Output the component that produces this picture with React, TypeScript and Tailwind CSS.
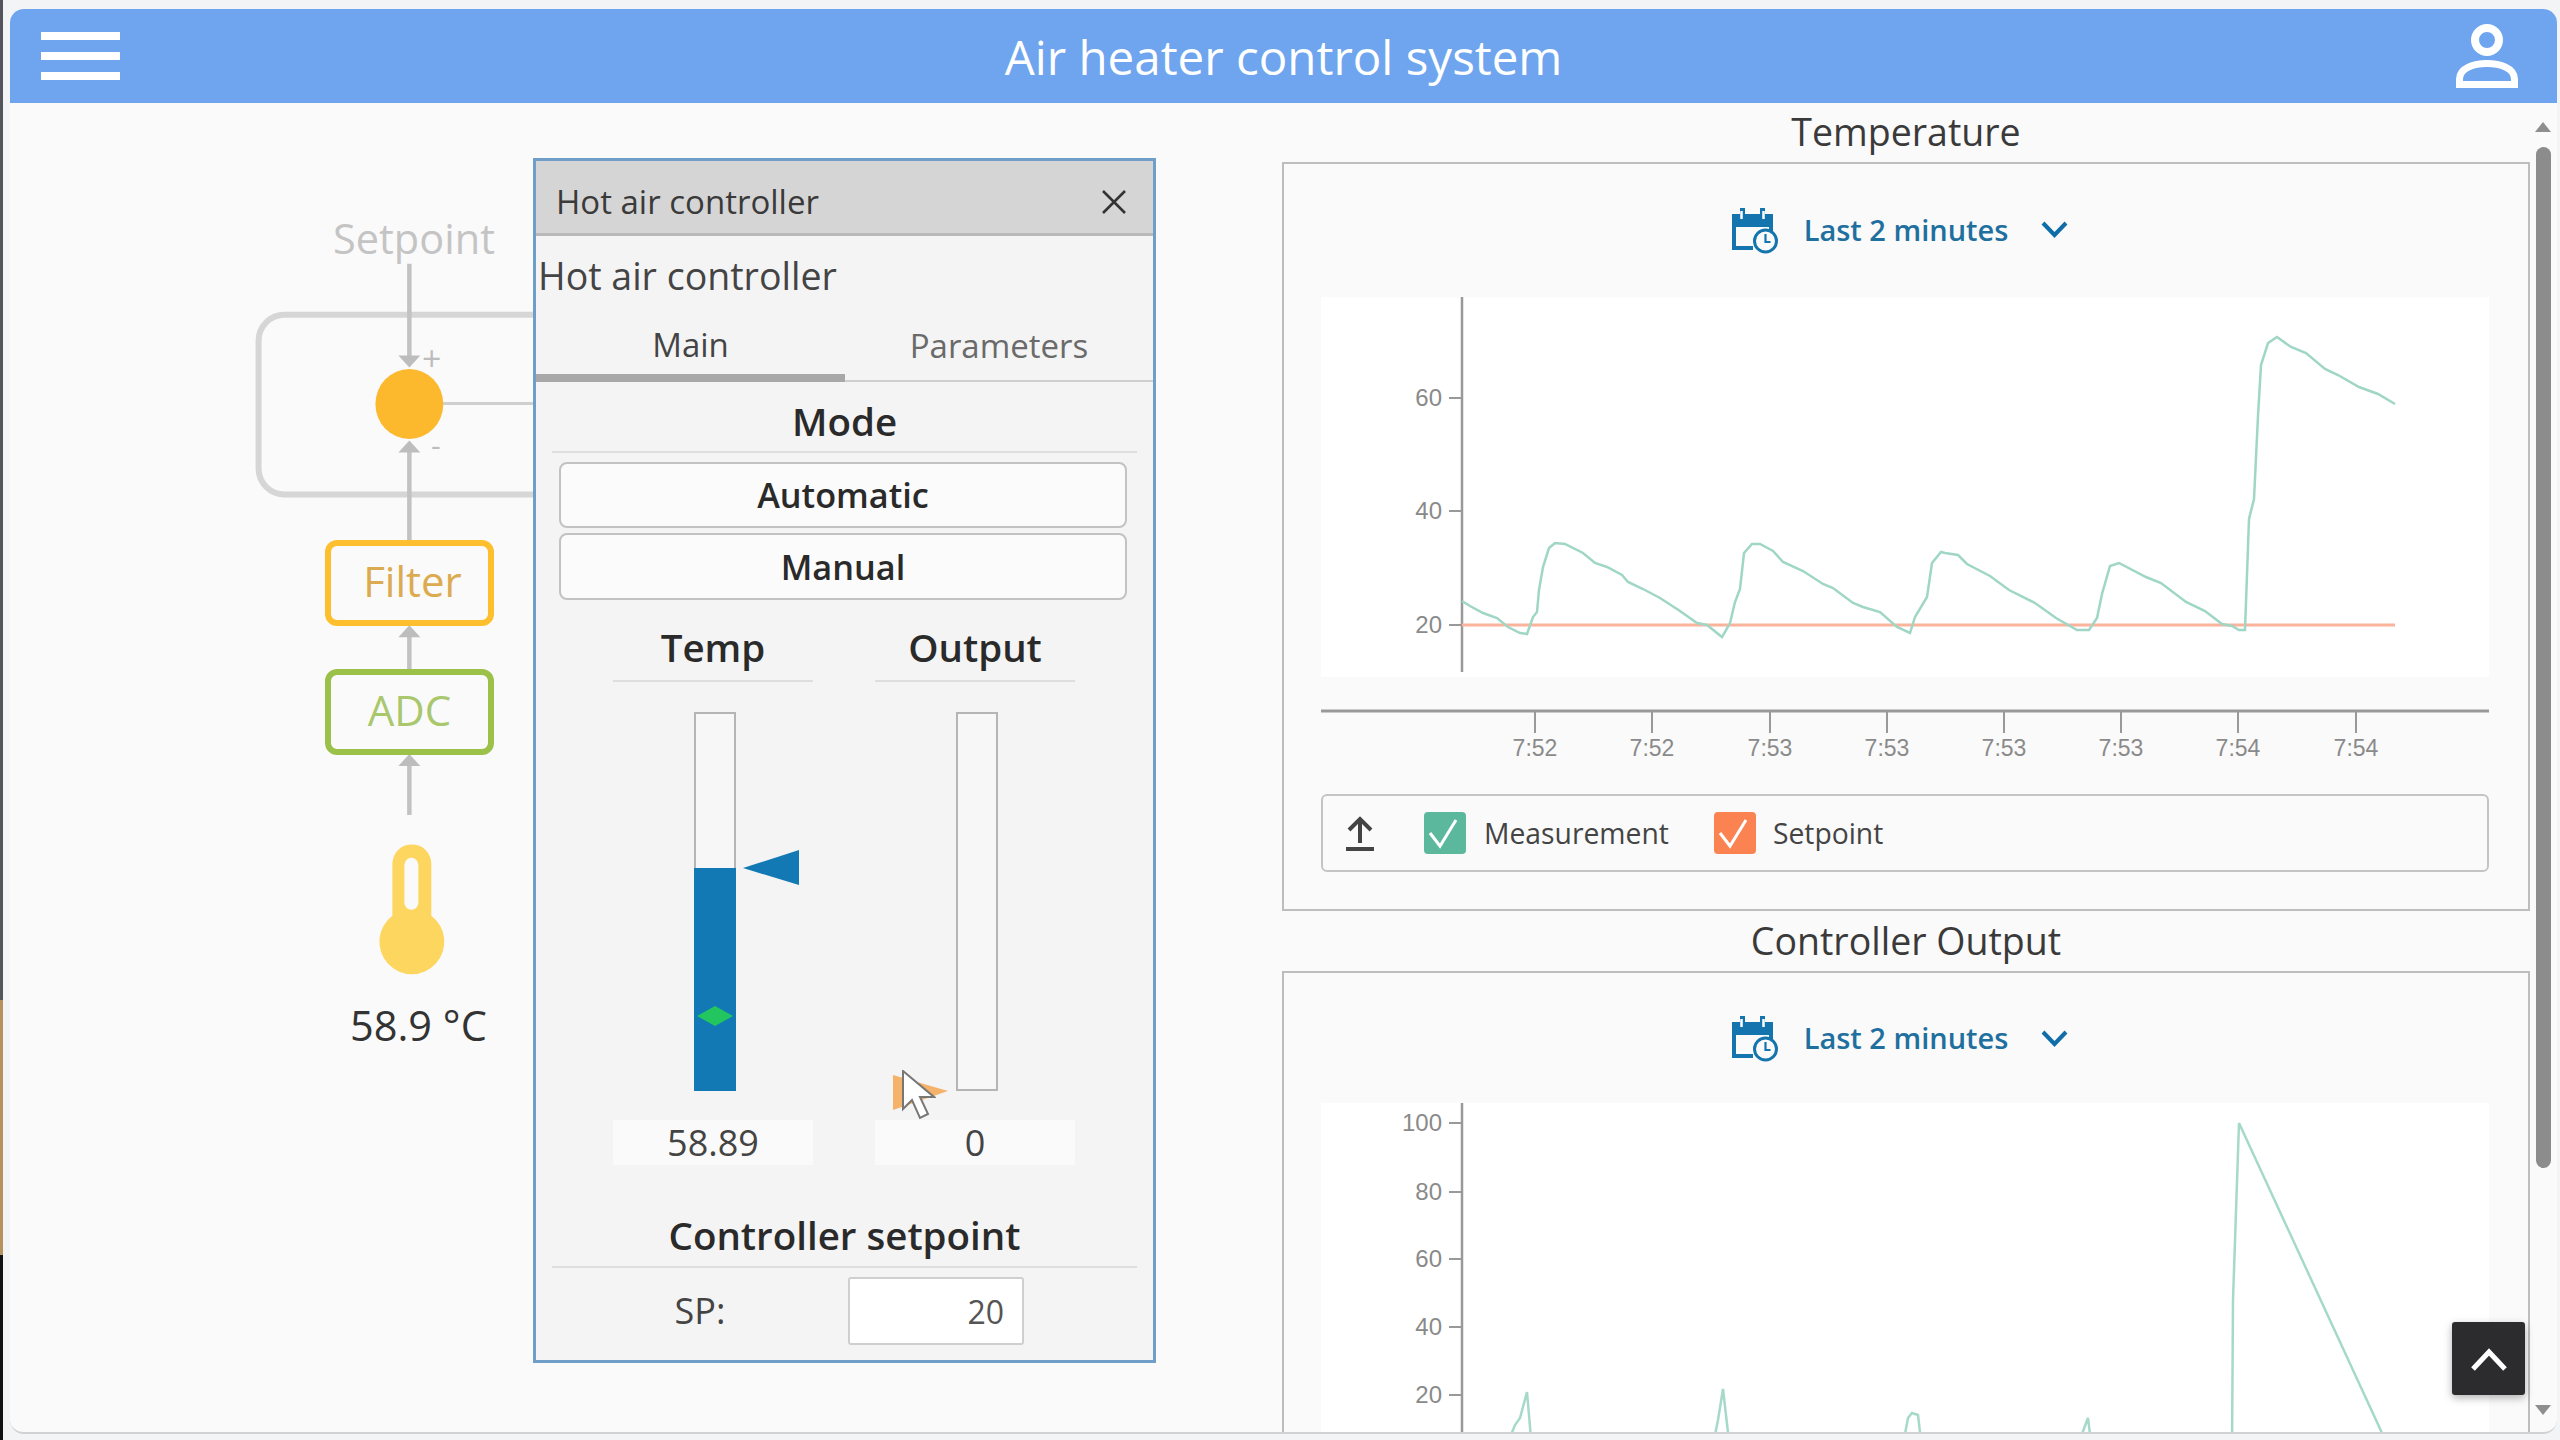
const tempLine =
  "1462,601 1470,606 1483,613 1497,618 1508,627 1520,633 1527,634 1533,617 1537,612 1539,590 1543,567 1549,548 1555,543 1565,544 1583,553 1595,563 1607,567 1622,575 1628,582 1643,589 1660,598 1680,611 1697,623 1707,625 1722,637 1730,623 1735,602 1740,589 1744,553 1752,544 1760,544 1773,551 1783,562 1803,571 1823,584 1833,588 1853,603 1863,607 1880,612 1897,627 1910,633 1915,617 1927,597 1932,563 1941,552 1945,553 1958,555 1967,564 1990,576 2009,590 2035,603 2056,618 2077,630 2089,630 2097,618 2102,594 2110,566 2119,563 2146,577 2161,583 2186,602 2205,611 2222,624 2232,626 2239,630 2245,630 2249,519 2254,499 2258,416 2261,365 2268,343 2277,337 2291,347 2306,353 2325,369 2338,375 2359,387 2378,394 2395,404";

const outputLine =
  "1505,1450 1515,1425 1520,1418 1527,1392 1532,1450 1712,1450 1718,1420 1723,1389 1730,1450 1902,1450 1908,1418 1912,1413 1918,1415 1922,1450 2076,1450 2088,1418 2092,1450 2232,1450 2233,1300 2239,1123 2382,1433 2390,1450";

const timeTicks = [
  [1535, "7:52"],
  [1652, "7:52"],
  [1770, "7:53"],
  [1887, "7:53"],
  [2004, "7:53"],
  [2121, "7:53"],
  [2238, "7:54"],
  [2356, "7:54"],
] as const;

function CalendarIcon() {
  return (
    <svg viewBox="0 0 47 48" className="h-[48px] w-[47px] shrink-0">
      <path d="M0 8h8V2h5v6h15V2h5v6h8v13H0z" fill="#1474ad" />
      <path d="M9.5 5v8M31.5 5v8" stroke="#fff" strokeWidth="2.5" />
      <path d="M2 20v22h19M39 20v6" fill="none" stroke="#1474ad" strokeWidth="4" />
      <circle cx="33.5" cy="35" r="11" fill="#fafafa" stroke="#1474ad" strokeWidth="3" />
      <path d="M33.5 28v8h5" fill="none" stroke="#1474ad" strokeWidth="2.2" />
    </svg>
  );
}

function RangePicker() {
  return (
    <div className="mr-[12px] flex items-center justify-center">
      <CalendarIcon />
      <span className="ml-[25px] text-[29px] font-semibold text-[#1f6f9f]">Last 2 minutes</span>
      <svg viewBox="0 0 27 17" className="ml-[33px] h-[17px] w-[27px]">
        <path d="M2 2l11.5 12L25 2" fill="none" stroke="#0f6ea8" strokeWidth="4" />
      </svg>
    </div>
  );
}

function YLabels({ ticks }: { ticks: [number, string][] }) {
  return (
    <>
      {ticks.map(([y, label]) => (
        <g key={label}>
          <line x1="1449" x2="1462" y1={y} y2={y} stroke="#999" strokeWidth="2" />
          <text x="1442" y={y + 8} textAnchor="end" fontSize="24" fill="#8a8a8a" fontFamily="Liberation Sans">
            {label}
          </text>
        </g>
      ))}
    </>
  );
}

function TemperatureChart() {
  return (
    <svg viewBox="1321 297 1168 468" className="ml-[37px] block h-[468px] w-[1168px]">
      <rect x="1321" y="297" width="1168" height="380" fill="#fff" />
      <line x1="1462" x2="1462" y1="296" y2="672" stroke="#999" strokeWidth="2.5" />
      <YLabels
        ticks={[
          [398, "60"],
          [511, "40"],
          [625, "20"],
        ]}
      />
      <line x1="1462" x2="2395" y1="625" y2="625" stroke="#fcb39c" strokeWidth="3" />
      <polyline points={tempLine} fill="none" stroke="#9fd6c5" strokeWidth="2.5" />
      <line x1="1321" x2="2489" y1="711" y2="711" stroke="#999" strokeWidth="3" />
      {timeTicks.map(([x, label], i) => (
        <g key={i}>
          <line x1={x} x2={x} y1="711" y2="733" stroke="#999" strokeWidth="2" />
          <text x={x} y="756" textAnchor="middle" fontSize="23" fill="#8a8a8a" fontFamily="Liberation Sans">
            {label}
          </text>
        </g>
      ))}
    </svg>
  );
}

function OutputChart() {
  return (
    <svg viewBox="1321 1103 1168 340" className="ml-[37px] block h-[340px] w-[1168px]">
      <rect x="1321" y="1103" width="1168" height="340" fill="#fff" />
      <line x1="1462" x2="1462" y1="1103" y2="1443" stroke="#999" strokeWidth="2.5" />
      <YLabels
        ticks={[
          [1123, "100"],
          [1192, "80"],
          [1259, "60"],
          [1327, "40"],
          [1395, "20"],
        ]}
      />
      <polyline points={outputLine} fill="none" stroke="#a6d9ca" strokeWidth="2.5" />
    </svg>
  );
}

function LegendCheck({ color }: { color: string }) {
  return (
    <svg viewBox="0 0 42 42" className="h-[42px] w-[42px] shrink-0">
      <rect width="42" height="42" rx="4" fill={color} />
      <path d="M6 21l10 13L32 8" fill="none" stroke="#fff" strokeWidth="3" />
    </svg>
  );
}

function Legend() {
  return (
    <div className="mt-[29px] ml-[37px] flex h-[78px] w-[1168px] items-center rounded-[6px] border-2 border-[#c4c4c4] pl-[23px] text-[28.300px] text-[#444]">
      <svg viewBox="0 0 28 35" className="h-[35px] w-[28px] shrink-0">
        <path d="M14 27V3M3 14L14 3l11 11" fill="none" stroke="#444" strokeWidth="4" />
        <path d="M0 33h28" stroke="#444" strokeWidth="4" />
      </svg>
      <div className="ml-[50px]">
        <LegendCheck color="#5cb89d" />
      </div>
      <span className="ml-[18px]">Measurement</span>
      <div className="ml-[45px]">
        <LegendCheck color="#fb8352" />
      </div>
      <span className="ml-[17px]">Setpoint</span>
    </div>
  );
}

function Arrow({ x, tip, up }: { x: number; tip: number; up?: boolean }) {
  const base = up ? tip + 12 : tip - 12;
  return <polygon points={`${x - 11},${base} ${x + 11},${base} ${x},${tip}`} fill="#bdbdbd" />;
}

function Diagram() {
  return (
    <>
      <svg viewBox="10 103 1272 1331" className="absolute inset-0 h-full w-full">
        <rect x="258" y="315" width="500" height="180" rx="26" fill="none" stroke="#d6d6d6" strokeWidth="6" />
        <g stroke="#c2c2c2" strokeWidth="4.500">
          <line x1="409" x2="409" y1="264" y2="358" />
          <line x1="409" x2="409" y1="450" y2="543" />
          <line x1="409" x2="409" y1="632" y2="671" />
          <line x1="409" x2="409" y1="762" y2="816" />
        </g>
        <line x1="440" x2="540" y1="404" y2="404" stroke="#cfcfcf" strokeWidth="3" />
        <Arrow x={409} tip={368} />
        <Arrow x={409} tip={441} up />
        <Arrow x={409} tip={626} up />
        <Arrow x={409} tip={755} up />
        <ellipse cx="409" cy="404.5" rx="34" ry="35" fill="#fdb92e" />
        <path d="M392 865a19.500 19.500 0 0 1 39 0v52a32.500 32.500 0 1 1-39 0z" fill="#fdd65f" />
        <rect x="404" y="859" width="14" height="52" rx="7" fill="#fafafa" />
      </svg>
      <span className="absolute top-[110px] left-[323px] text-[41.500px] leading-[50px] text-[#c4c4c4]">Setpoint</span>
      <span className="absolute top-[237px] left-[412px] text-[34px] leading-[36px] text-[#bdbdbd]">+</span>
      <span className="absolute top-[324px] left-[421px] text-[30px] leading-[36px] text-[#bdbdbd]">-</span>
      <div className="absolute top-[437px] left-[315px] flex h-[86px] w-[169px] items-center justify-center rounded-[12px] border-[6px] border-[#fdbf2d] bg-[#fafafa] pb-[6px] pl-[6px] text-[42px] text-[#dcab50]">
        Filter
      </div>
      <div className="absolute top-[566px] left-[315px] flex h-[86px] w-[169px] items-center justify-center rounded-[12px] border-[6px] border-[#9cc14a] bg-[#fafafa] pb-[6px] text-[42px] text-[#a9c76c]">
        ADC
      </div>
      <span className="absolute top-[898px] left-[340px] text-[41.500px] leading-[48px] whitespace-nowrap text-[#333]">
        58.9 °C
      </span>
    </>
  );
}

function SectionTitle({ children }: { children: string }) {
  return <span className="text-[38.500px] font-semibold text-[#2a2a2a]">{children}</span>;
}

function ModeButton({ label, className }: { label: string; className: string }) {
  return (
    <button
      className={`block w-[568px] rounded-[8px] border-2 border-[#c2c2c2] bg-[#fbfbfb] text-[34.300px] font-semibold text-[#2a2a2a] ${className}`}
    >
      {label}
    </button>
  );
}

function Gauge({ title, value, children }: { title: string; value: string; children: React.ReactNode }) {
  return (
    <div className="w-[200px]">
      <div className="flex h-[66px] items-center justify-center border-b-2 border-[#dedede]">
        <SectionTitle>{title}</SectionTitle>
      </div>
      <div className="mt-[30px] ml-[81px] h-[379px] w-[42px]">{children}</div>
      <div className="mt-[29px] flex h-[45px] items-center justify-center bg-[#fafafa] text-[36px] text-[#444]">
        {value}
      </div>
    </div>
  );
}

function ControllerDialog() {
  return (
    <div className="absolute top-[55px] left-[523px] h-[1205px] w-[623px] border-[3px] border-[#6f9fc9] bg-[#f4f4f4] text-[#444]">
      <div className="flex h-[75px] items-center justify-between border-b-[3px] border-[#b9b9b9] bg-[#d5d5d5] pt-[9px] pr-[27px] pl-[20px] text-[33px] text-[#3a3a3a]">
        <span className="mt-[1px]">Hot air controller</span>
        <svg viewBox="0 0 24 24" className="h-[24px] w-[24px]">
          <path d="M1 1l22 22M23 1L1 23" stroke="#333" strokeWidth="2.6" />
        </svg>
      </div>
      <div className="flex h-[80px] items-center pl-[2px] text-[37.500px] text-[#444]">Hot air controller</div>
      <div className="flex h-[66px] items-stretch text-[33px]">
        <div className="flex w-[309px] items-center justify-center border-b-[8px] border-[#a8a8a8] text-[#444]">
          Main
        </div>
        <div className="flex flex-1 items-center justify-center border-b-2 border-[#cfcfcf] pb-[4px] text-[#6a6a6a]">
          Parameters
        </div>
      </div>
      <div className="mx-[16px] flex h-[71px] items-center justify-center border-b-2 border-[#dedede] pt-[11px]">
        <SectionTitle>Mode</SectionTitle>
      </div>
      <ModeButton label="Automatic" className="mt-[9px] ml-[23px] h-[66px]" />
      <ModeButton label="Manual" className="mt-[5px] ml-[23px] h-[67px]" />
      <div className="mt-[16px] ml-[77px] flex gap-[62px]">
        <Gauge title="Temp" value="58.89">
          <div className="relative flex h-full flex-col justify-end border-2 border-[#b5b5b5] bg-[#f7f7f7]">
            <div className="-mx-[2px] -mb-[2px] h-[223px] bg-[#1279b4]" />
            <svg viewBox="0 0 56 35" className="absolute top-[136px] left-[47px] h-[35px] w-[56px]">
              <polygon points="0,18 56,0 56,35" fill="#1279b4" />
            </svg>
            <svg viewBox="0 0 36 20" className="absolute top-[292px] left-[1px] h-[20px] w-[36px]">
              <polygon points="0,10 18,0 36,10 18,20" fill="#22c55e" />
            </svg>
          </div>
        </Gauge>
        <Gauge title="Output" value="0">
          <div className="relative h-full border-2 border-[#b5b5b5] bg-[#f7f7f7]">
            <svg viewBox="0 0 55 35" className="absolute top-[361px] left-[-65px] h-[35px] w-[55px]">
              <polygon points="0,0 55,16 0,35" fill="#f4b26a" />
            </svg>
            <svg viewBox="0 0 34 50" className="absolute top-[356px] left-[-56px] h-[50px] w-[34px]">
              <path d="M1 1v38l9-9 8 18 8-4-8-17h14z" fill="#fff" stroke="#777" strokeWidth="2" />
            </svg>
          </div>
        </Gauge>
      </div>
      <div className="mx-[16px] mt-[41px] flex h-[62px] items-center justify-center border-b-2 border-[#dedede]">
        <SectionTitle>Controller setpoint</SectionTitle>
      </div>
      <div className="mx-[16px] mt-[9px] flex items-center">
        <span className="w-[296px] text-center text-[36px] text-[#444]">SP:</span>
        <input
          readOnly
          value="20"
          className="h-[68px] w-[176px] rounded-[3px] border-2 border-[#cfcfcf] bg-white pr-[18px] text-right text-[32px] text-[#555]"
        />
      </div>
    </div>
  );
}

function Scrollbar() {
  return (
    <div className="flex w-[27px] flex-col items-center pt-[19px] pr-[1px]">
      <svg viewBox="0 0 16 10" className="h-[10px] w-[16px]">
        <polygon points="0,10 8,0 16,10" fill="#8e8e8e" />
      </svg>
      <div className="mt-[15px] h-[1021px] w-[15px] rounded-[8px] bg-[#8c8c8c]" />
      <svg viewBox="0 0 16 10" className="mt-[237px] h-[10px] w-[16px]">
        <polygon points="0,0 16,0 8,10" fill="#8e8e8e" />
      </svg>
    </div>
  );
}

export default function App() {
  return (
    <div className="flex h-[1440px] w-[2560px] overflow-hidden bg-[#f3f4f5] font-['Open_Sans',sans-serif]">
      <div className="flex w-[3px] flex-col">
        <div className="h-[1000px] bg-[#54545c]" />
        <div className="h-[255px] bg-[#b5935f]" />
        <div className="flex-1 bg-[#111]" />
      </div>
      <div className="relative mt-[9px] mb-[6px] ml-[7px] flex w-[2547px] flex-col overflow-hidden rounded-[14px] border-b-2 border-[#d2d2d2] bg-[#fafafa]">
        <header className="grid h-[94px] shrink-0 grid-cols-[1fr_auto_1fr] items-center bg-[#6ea5ee] text-white">
          <div className="ml-[31px] flex w-[79px] flex-col gap-[12px]">
            <div className="h-[8px] bg-white" />
            <div className="h-[8px] bg-white" />
            <div className="h-[8px] bg-white" />
          </div>
          <h1 className="pt-[2px] text-[47.500px]">Air heater control system</h1>
          <svg viewBox="0 0 62 64" className="mr-[39px] h-[64px] w-[62px] justify-self-end">
            <circle cx="31" cy="16" r="12" fill="none" stroke="#fff" strokeWidth="8" />
            <path d="M3.500 60.500V55C3.500 44 18 39.500 31 39.500S58.500 44 58.500 55v5.500z" fill="none" stroke="#fff" strokeWidth="7" />
          </svg>
        </header>
        <main className="flex min-h-0 flex-1">
          <div className="relative w-[1272px] shrink-0">
            <Diagram />
            <ControllerDialog />
          </div>
          <div className="w-[1248px] shrink-0 text-[#3a3a3a]">
            <h2 className="flex h-[59px] items-center justify-center pb-[1px] text-[37.500px]">Temperature</h2>
            <section className="h-[749px] border-2 border-[#bdbdbd]">
              <div className="flex h-[133px] items-center justify-center pb-[2px]">
                <RangePicker />
              </div>
              <TemperatureChart />
              <Legend />
            </section>
            <h2 className="flex h-[60px] items-center justify-center text-[37.500px]">Controller Output</h2>
            <section className="h-[600px] border-2 border-[#bdbdbd]">
              <div className="flex h-[130px] items-center justify-center">
                <RangePicker />
              </div>
              <OutputChart />
            </section>
          </div>
          <Scrollbar />
        </main>
        <button className="absolute right-[32px] bottom-[37px] flex h-[73px] w-[73px] items-center justify-center rounded-[3px] bg-[#2c2c2e] shadow-[0_3px_8px_rgba(0,0,0,0.3)]">
          <svg viewBox="0 0 36 24" className="h-[24px] w-[36px]">
            <path d="M2 22L18 5l16 17" fill="none" stroke="#fff" strokeWidth="5" />
          </svg>
        </button>
      </div>
    </div>
  );
}
